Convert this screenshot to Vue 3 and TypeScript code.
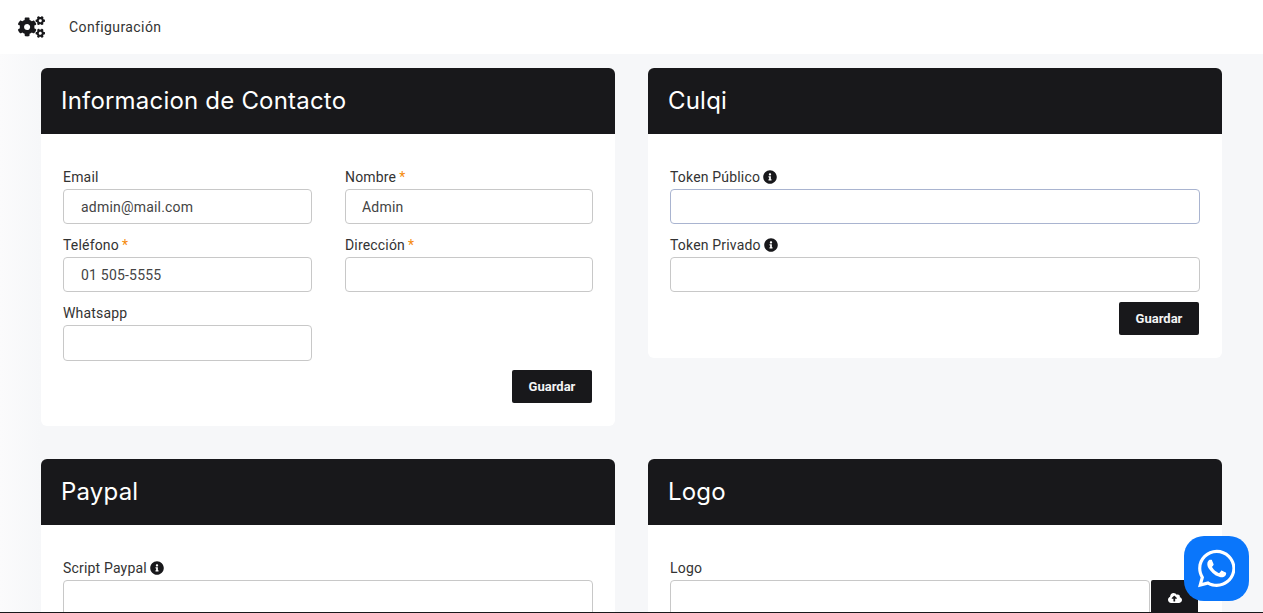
<script setup lang="ts">
const cogs = "M512.1 191l-8.2 14.3c-3 5.3-9.4 7.5-15.1 5.4-11.8-4.4-22.6-10.7-32.1-18.6-4.6-3.8-5.8-10.5-2.8-15.7l8.2-14.3c-6.9-8-12.3-17.3-15.9-27.4h-16.5c-6 0-11.2-4.3-12.2-10.3-2-12-2.1-24.6 0-37.1 1-6 6.2-10.4 12.2-10.4h16.5c3.6-10.1 9-19.4 15.9-27.4l-8.2-14.3c-3-5.2-1.9-11.9 2.8-15.7 9.5-7.9 20.4-14.2 32.1-18.6 5.7-2.1 12.1.1 15.1 5.4l8.2 14.3c10.5-1.9 21.2-1.9 31.7 0L552 6.3c3-5.3 9.4-7.5 15.1-5.4 11.8 4.4 22.6 10.7 32.1 18.6 4.6 3.8 5.8 10.5 2.8 15.7l-8.2 14.3c6.9 8 12.3 17.3 15.9 27.4h16.5c6 0 11.2 4.3 12.2 10.3 2 12 2.1 24.6 0 37.1-1 6-6.2 10.4-12.2 10.4h-16.5c-3.6 10.1-9 19.4-15.9 27.4l8.2 14.3c3 5.2 1.9 11.9-2.8 15.7-9.5 7.9-20.4 14.2-32.1 18.6-5.7 2.1-12.1-.1-15.1-5.4l-8.2-14.3c-10.4 1.9-21.2 1.9-31.7 0zm-10.5-58.8c38.5 29.6 82.4-14.3 52.8-52.8-38.5-29.7-82.4 14.3-52.8 52.8zM386.3 286.1l33.7 16.8c10.1 5.8 14.5 18.1 10.5 29.1-8.9 24.2-26.4 46.4-42.6 65.8-7.4 8.9-20.2 11.1-30.3 5.3l-29.1-16.8c-16 13.7-34.6 24.6-54.9 31.7v33.6c0 11.6-8.3 21.6-19.7 23.6-24.6 4.2-50.4 4.4-75.9 0-11.5-2-20-11.9-20-23.6V418c-20.3-7.2-38.9-18-54.9-31.7L74 403c-10 5.8-22.9 3.6-30.3-5.3-16.2-19.4-33.3-41.6-42.2-65.7-4-10.9.4-23.2 10.5-29.1l33.3-16.8c-3.9-20.9-3.9-42.4 0-63.4L12 205.8c-10.1-5.8-14.6-18.1-10.5-29 8.9-24.2 26-46.4 42.2-65.8 7.4-8.9 20.2-11.1 30.3-5.3l29.1 16.8c16-13.7 34.6-24.6 54.9-31.7V57.1c0-11.5 8.2-21.5 19.6-23.5 24.6-4.2 50.5-4.4 76-.1 11.5 2 20 11.9 20 23.6v33.6c20.3 7.2 38.9 18 54.9 31.7l29.1-16.8c10-5.8 22.9-3.6 30.3 5.3 16.2 19.4 33.2 41.6 42.1 65.8 4 10.9.1 23.2-10 29.1l-33.7 16.8c3.9 21 3.9 42.5 0 63.5zm-117.6 21.1c59.2-77-28.7-164.9-105.7-105.7-59.2 77 28.7 164.9 105.7 105.7zm243.4 182.7l-8.2 14.3c-3 5.3-9.4 7.5-15.1 5.4-11.8-4.4-22.6-10.7-32.1-18.6-4.6-3.8-5.8-10.5-2.8-15.7l8.2-14.3c-6.9-8-12.3-17.3-15.9-27.4h-16.5c-6 0-11.2-4.3-12.2-10.3-2-12-2.1-24.6 0-37.1 1-6 6.2-10.4 12.2-10.4h16.5c3.6-10.1 9-19.4 15.9-27.4l-8.2-14.3c-3-5.2-1.9-11.9 2.8-15.7 9.5-7.9 20.4-14.2 32.1-18.6 5.7-2.1 12.1.1 15.1 5.4l8.2 14.3c10.5-1.9 21.2-1.9 31.7 0l8.2-14.3c3-5.3 9.4-7.5 15.1-5.4 11.8 4.4 22.6 10.7 32.1 18.6 4.6 3.8 5.8 10.5 2.8 15.7l-8.2 14.3c6.9 8 12.3 17.3 15.9 27.4h16.5c6 0 11.2 4.3 12.2 10.3 2 12 2.1 24.6 0 37.1-1 6-6.2 10.4-12.2 10.4h-16.5c-3.6 10.1-9 19.4-15.9 27.4l8.2 14.3c3 5.2 1.9 11.9-2.8 15.7-9.5 7.9-20.4 14.2-32.1 18.6-5.7 2.1-12.1-.1-15.1-5.4l-8.2-14.3c-10.4 1.9-21.2 1.9-31.7 0zM501.6 431c38.5 29.6 82.4-14.3 52.8-52.8-38.5-29.6-82.4 14.3-52.8 52.8z";
const info = "M256 8C119 8 8 119.1 8 256c0 137 111 248 248 248s248-111 248-248C504 119.1 393 8 256 8zm0 110c23.2 0 42 18.8 42 42s-18.8 42-42 42-42-18.8-42-42 18.8-42 42-42zm56 254c0 6.6-5.4 12-12 12h-88c-6.6 0-12-5.4-12-12v-24c0-6.6 5.4-12 12-12h12v-64h-12c-6.6 0-12-5.4-12-12v-24c0-6.6 5.4-12 12-12h64c6.6 0 12 5.4 12 12v100h12c6.6 0 12 5.4 12 12v24z";
const cloud = "M537.6 226.6c4.1-10.7 6.4-22.4 6.4-34.6 0-53-43-96-96-96-19.7 0-38.1 6-53.3 16.2C367 64.2 315.3 32 256 32c-88.4 0-160 71.6-160 160 0 2.7.1 5.4.2 8.1C40.2 219.8 0 273.2 0 336c0 79.5 64.5 144 144 144h368c70.7 0 128-57.3 128-128 0-61.9-44-113.6-102.4-125.4zM393.4 288H328v112c0 8.8-7.2 16-16 16h-48c-8.8 0-16-7.2-16-16V288h-65.4c-14.3 0-21.4-17.2-11.3-27.3l105.4-105.4c6.2-6.2 16.4-6.2 22.6 0l105.4 105.4c10.1 10.1 2.9 27.3-11.3 27.3z";
const whatsapp = "M380.9 97.1C339 55.1 283.2 32 223.9 32c-122.4 0-222 99.6-222 222 0 39.1 10.2 77.3 29.6 111L0 480l117.7-30.9c32.4 17.7 68.9 27 106.1 27h.1c122.3 0 224.1-99.6 224.1-222 0-59.3-25.2-115-67.1-157zm-157 341.6c-33.2 0-65.7-8.9-94-25.7l-6.7-4-69.8 18.3L72 359.2l-4.4-7c-18.5-29.4-28.2-63.3-28.2-98.2 0-101.7 82.8-184.5 184.6-184.5 49.3 0 95.6 19.2 130.4 54.1 34.8 34.9 56.2 81.2 56.1 130.5 0 101.8-84.9 184.6-186.6 184.6zm101.2-138.2c-5.5-2.8-32.8-16.2-37.9-18-5.1-1.9-8.8-2.8-12.5 2.8-3.7 5.6-14.3 18-17.6 21.8-3.2 3.7-6.5 4.2-12 1.4-32.6-16.3-54-29.1-75.5-66-5.7-9.8 5.7-9.1 16.3-30.3 1.8-3.7.9-6.9-.5-9.7-1.4-2.8-12.5-30.1-17.1-41.2-4.5-10.8-9.1-9.3-12.5-9.5-3.2-.2-6.9-.2-10.6-.2-3.7 0-9.7 1.4-14.8 6.9-5.1 5.6-19.4 19-19.4 46.3 0 27.3 19.9 53.7 22.6 57.4 2.8 3.7 39.1 59.7 94.8 83.8 35.2 15.2 49 16.5 66.6 13.9 10.7-1.6 32.8-13.4 37.4-26.4 4.6-13 4.6-24.1 3.2-26.4-1.3-2.5-5-3.9-10.5-6.6z";
</script>

<template>
  <div class="page">
    <header class="topbar">
      <svg class="cogs" viewBox="0 0 640 512"><path :d="cogs" /></svg>
      <span class="crumb">Configuración</span>
    </header>
    <main class="grid">
      <section class="card">
        <h2 class="card-head">Informacion de Contacto</h2>
        <div class="card-body">
          <div class="fields two">
            <div class="field">
              <label>Email</label>
              <input class="pad" value="admin@mail.com" />
            </div>
            <div class="field">
              <label>Nombre <span class="req">*</span></label>
              <input class="pad pad-b" value="Admin" />
            </div>
            <div class="field">
              <label>Teléfono <span class="req">*</span></label>
              <input class="pad" value="01 505-5555" />
            </div>
            <div class="field">
              <label>Dirección <span class="req">*</span></label>
              <input />
            </div>
            <div class="field">
              <label>Whatsapp</label>
              <input class="tall" />
            </div>
          </div>
          <div class="actions first"><button class="btn">Guardar</button></div>
        </div>
      </section>

      <section class="card">
        <h2 class="card-head">Culqi</h2>
        <div class="card-body">
          <div class="fields">
            <div class="field">
              <label>Token Público <svg class="info" viewBox="0 0 512 512"><path :d="info" /></svg></label>
              <input class="focused" />
            </div>
            <div class="field">
              <label>Token Privado <svg class="info" viewBox="0 0 512 512"><path :d="info" /></svg></label>
              <input />
            </div>
          </div>
          <div class="actions"><button class="btn">Guardar</button></div>
        </div>
      </section>

      <section class="card">
        <h2 class="card-head">Paypal</h2>
        <div class="card-body">
          <div class="field">
            <label>Script Paypal <svg class="info" viewBox="0 0 512 512"><path :d="info" /></svg></label>
            <input class="tall" />
          </div>
        </div>
      </section>

      <section class="card">
        <h2 class="card-head">Logo</h2>
        <div class="card-body">
          <div class="field">
            <label>Logo</label>
            <div class="file-row">
              <input class="tall" />
              <button class="upload" aria-label="Subir">
                <svg viewBox="0 0 640 512"><path :d="cloud" /></svg>
              </button>
            </div>
          </div>
        </div>
      </section>
    </main>
    <a class="wa" aria-label="Whatsapp">
      <svg viewBox="0 0 448 512"><path :d="whatsapp" /></svg>
    </a>
    <div class="edge"></div>
  </div>
</template>

<style>
html, body { margin: 0; height: 613px; overflow: hidden; }
</style>

<style scoped>
.page {
  position: relative;
  height: 613px;
  overflow: hidden;
  background: linear-gradient(90deg, #fbfbfc 0, #f6f7f9 40px);
  font-family: Roboto, "Liberation Sans", sans-serif;
  font-size: 14px;
  color: #333;
}
.topbar {
  height: 54px;
  background: #fff;
  display: flex;
  align-items: center;
  box-sizing: border-box;
  padding-left: 18px;
}
.cogs { width: 27px; height: 22px; fill: #18181b; }
.crumb { margin-left: 24px; font-size: 14px; letter-spacing: 0.4px; color: #333; }
.grid {
  display: grid;
  grid-template-columns: 574px 574px;
  column-gap: 33px;
  row-gap: 33px;
  padding: 14px 0 0 41px;
  align-items: start;
}
.card { background: #fff; border-radius: 6px; overflow: hidden; }
.card-head {
  margin: 0;
  height: 66px;
  box-sizing: border-box;
  padding: 0 0 1px 20px;
  display: flex;
  align-items: center;
  background: #18181b;
  color: #fff;
  font-family: Inter, "Open Sans", sans-serif;
  font-size: 24px;
  font-weight: 400;
  letter-spacing: 0.2px;
}
.card-body { padding: 33px 22px 23px; }
.fields { display: grid; row-gap: 11px; }
.fields.two { grid-template-columns: 249px 248px; column-gap: 33px; }
.field { display: flex; flex-direction: column; }
label {
  height: 22px;
  line-height: 20px;
  font-size: 14px;
  letter-spacing: 0.18px;
  color: #333;
  display: flex;
  align-items: flex-start;
  gap: 3px;
}
.req { color: #f58a0b; }
.info { width: 14px; height: 14px; fill: #18181b; margin-top: 3px; }
input {
  height: 35px;
  width: 100%;
  box-sizing: border-box;
  border: 1px solid #c8c8c8;
  border-radius: 4px;
  background: #fff;
  padding: 0 12px;
  outline: none;
  font-family: inherit;
  font-size: 14px;
  letter-spacing: 0.2px;
  color: #444;
}
input.pad { padding-left: 17px; }
input.pad-b { padding-left: 16px; }
input.tall { height: 36px; }
input.focused { border-color: #a9b4d0; }
.actions { display: flex; justify-content: flex-end; margin-top: 10px; padding-right: 1px; }
.actions.first { margin-top: 9px; }
.btn {
  width: 80px;
  height: 33px;
  border: 0;
  border-radius: 2px;
  background: #18181b;
  color: #f4f4f5;
  font-family: inherit;
  font-size: 13px;
  font-weight: 700;
}
.file-row { display: flex; gap: 1px; padding-right: 2px; }
.upload {
  flex: none;
  width: 47px;
  height: 36px;
  border: 0;
  padding: 0;
  border-radius: 2px;
  background: #18181b;
  display: flex;
  align-items: center;
  justify-content: center;
}
.upload svg { width: 14px; height: 12px; fill: #fff; }
.wa {
  position: absolute;
  left: 1184px;
  top: 536px;
  width: 65px;
  height: 65px;
  border-radius: 20px;
  background: #0a76fb;
  display: flex;
  align-items: center;
  justify-content: center;
}
.wa svg { width: 37.5px; height: 43px; fill: #fff; }
.edge { position: absolute; left: 0; right: 0; bottom: 0; height: 1px; background: #18181b; }
</style>
